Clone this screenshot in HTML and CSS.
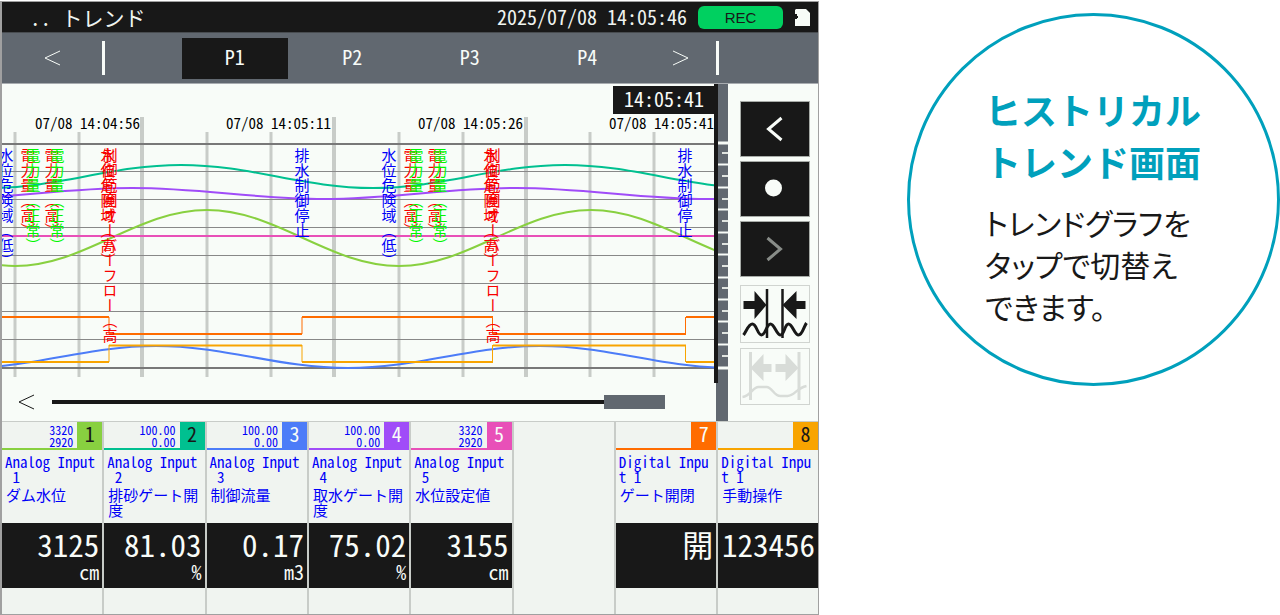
FILE: index.html
```
<!DOCTYPE html>
<html lang="ja">
<head>
<meta charset="utf-8">
<title>トレンド</title>
<link rel="stylesheet" href="styles.css">
</head>
<body>
<div class="page">
  <main class="screen">
    <header class="titlebar">
      <h1 class="title">.. トレンド</h1>
      <time class="clock">2025/07/08 14:05:46</time>
      <span class="rec">REC</span>
      <svg class="card-icon" viewBox="0 0 15 17" aria-hidden="true"><path d="M1 0h10l4 4v13H0V10h2V9h1V7H2V5H0V1z" fill="#f8fcf8"/></svg>
    </header>

    <nav class="tabs">
      <button class="step" aria-label="前へ"><svg viewBox="0 0 17 16"><path d="M16 1 1 8l15 7"/></svg></button>
      <span class="divider"></span>
      <div class="tab-list">
        <button class="tab active">P1</button>
        <button class="tab">P2</button>
        <button class="tab">P3</button>
        <button class="tab">P4</button>
      </div>
      <button class="step" aria-label="次へ"><svg viewBox="0 0 17 16"><path d="m1 1 15 7-15 7"/></svg></button>
      <span class="divider"></span>
      <span class="tab-end"></span>
    </nav>

    <section class="work">
      <div class="plot-area">
        <svg class="plot" viewBox="2 84 714 299">
          <g class="minor"><path d="M15 132V377M79 132V377M207 132V377M271 132V377M399 132V377M463 132V377M590 132V377M654 132V377"/></g>
          <g class="major"><path d="M142 117V377M334 117V377M526 117V377"/></g>
          <g class="rows"><path d="M2 171.5H715M2 199.5H715M2 227.5H715M2 255.5H715M2 283.5H715M2 311.5H715M2 339.5H715"/></g>
          <g class="edges"><path d="M2 144H715M2 368H715"/></g>
          <g class="series">
            <path class="c2" d="M-11 188C59 188 111 165 181 165S303 188 373 188S495 165 565 165S687 188 757 188"/>
            <path class="c4" d="M-60 199C10 199 62 188 132 188S254 199 324 199S446 188 516 188S638 199 708 199H716"/>
            <path class="c1" d="M-177 210C-107 210 -55 266 15 266S137 210 207 210S329 266 399 266S521 210 591 210S713 266 783 266"/>
            <path class="c5" d="M2 236H715"/>
            <path class="c3" d="M-36 368C34 368 86 346 156 346S278 368 348 368S470 346 540 346S662 368 732 368"/>
            <path class="thin c7" d="M109 317V334M302 317V334M492.500 317V334M685.500 317V334"/>
            <path class="thin c8" d="M109 345V362M302 345V362M492.500 345V362M685.500 345V362"/>
            <path class="c7" d="M2 317H109M109 334H302M302 317H493M493 334H686M686 317H715"/>
            <path class="c8" d="M2 362H109M109 345.500H302M302 362H493M493 345.500H686M686 362H715"/>
          </g>
          <g class="events">
            <text class="info" x="6" y="148">水位危険域（低）</text>
            <text class="alarm" x="28" y="148">電力量（高）</text>
            <text class="normal" x="33" y="148">電力量（正常）</text>
            <text class="alarm" x="52" y="148">電力量（高）</text>
            <text class="normal" x="57" y="148">電力量（正常）</text>
            <text class="alarm" x="108" y="148">水位危険域（高）</text>
            <text class="alarm" x="110" y="148">制御範囲オーバーフロー（高</text>
            <text class="info" x="302" y="148">排水制御停止</text>
            <text class="info" x="389" y="148">水位危険域（低）</text>
            <text class="alarm" x="411" y="148">電力量（高）</text>
            <text class="normal" x="416" y="148">電力量（正常）</text>
            <text class="alarm" x="435" y="148">電力量（高）</text>
            <text class="normal" x="440" y="148">電力量（正常）</text>
            <text class="alarm" x="491" y="148">水位危険域（高）</text>
            <text class="alarm" x="493" y="148">制御範囲オーバーフロー（高</text>
            <text class="info" x="685" y="148">排水制御停止</text>
          </g>
          <g class="times">
            <text x="140" y="129">07/08 14:04:56</text>
            <text x="331" y="129">07/08 14:05:11</text>
            <text x="523" y="129">07/08 14:05:26</text>
            <text x="714" y="129">07/08 14:05:41</text>
          </g>
          <path d="M613 86H716V114H613zM714 84H716V383H714z" fill="#181818"/>
          <text class="cursor-time" x="704" y="107">14:05:41</text>
        </svg>
        <div class="scroller">
          <button class="scroll-step" aria-label="過去へ"><svg viewBox="0 0 17 16"><path d="M16 1 1 8l15 7"/></svg></button>
          <input class="scroll" type="range" min="0" max="100" value="100" aria-label="表示位置">
        </div>
      </div>

      <svg class="rail" viewBox="0 0 12 337" preserveAspectRatio="none" aria-hidden="true">
        <path d="M0 0h12v337H0z" fill="#616870"/>
        <path d="M0 0h2v299H0z" fill="#181818"/>
        <path d="M2 59h10M2 284h10" stroke="#f8fcf8" stroke-width="3"/>
        <path d="M2 80.500h10M2 103.500h10M2 125.500h10M2 148.500h10M2 170.500h10M2 193.500h10M2 215.500h10M2 237.500h10M2 260.500h10" stroke="#f8fcf8" stroke-width="2"/>
        <path d="M6 69h6M6 92h6M6 115h6M6 137h6M6 160h6M6 182h6M6 204h6M6 227h6M6 249h6M6 272h6" stroke="#e0e4e0" stroke-width="2"/>
      </svg>

      <div class="tools">
        <button class="tool dark" aria-label="戻る"><svg viewBox="1 1 67 54"><path d="M41 17 28 28l13 11" fill="none" stroke="#f8fcf8" stroke-width="3"/></svg></button>
        <button class="tool dark" aria-label="停止"><svg viewBox="1 1 67 54"><circle cx="33" cy="27" r="8.500" fill="#f8fcf8"/></svg></button>
        <button class="tool dark" aria-label="進む"><svg viewBox="1 1 67 54"><path d="m27 17 13 11-13 11" fill="none" stroke="#888c88" stroke-width="3"/></svg></button>
        <button class="tool light zoom-in" aria-label="縮小"><svg viewBox="1 1 67 56" fill="#181818">
          <path d="M3 16h11V6l12 14-12 14V24H3zM65 16H56V6L42 20l14 14V24h9z"/>
          <path d="M26.500 4v49M42 4v49" fill="none" stroke="#181818" stroke-width="2.500"/>
          <path d="M3 50C6 46 8 39 12 39S17 50 21 50S26 39 30 39S36 50 40 50S44 39 48 39S54 50 58 50S63 42 66 38" fill="none" stroke="#181818" stroke-width="3"/>
        </svg></button>
        <button class="tool light zoom-out" aria-label="拡大" disabled><svg viewBox="1 1 67 55" fill="#d8dcd8">
          <path d="M31 16h-8V6L10 20l13 13v-9h8zM35 16h10V6l13 14-13 13v-9H35z"/>
          <path d="M10 4v48M58.500 4v48" fill="none" stroke="#d8dcd8" stroke-width="3"/>
          <path d="M2 49C10 48 12 39 18 39H26C32 39 33 48 40 48H47C54 48 56 40 66 38" fill="none" stroke="#d8dcd8" stroke-width="2.500"/>
        </svg></button>
      </div>
    </section>

    <section class="channels">
      <article class="channel b1">
        <header class="head"><span class="limits">3320<br>2920</span><span class="num">1</span></header>
        <h2 class="name">Analog Input
 1</h2><p class="tag">ダム水位</p>
        <div class="reading"><strong class="value">3125</strong><span class="unit">cm</span></div>
      </article>
      <article class="channel b2">
        <header class="head"><span class="limits">100.00<br>0.00</span><span class="num">2</span></header>
        <h2 class="name">Analog Input
 2</h2><p class="tag">排砂ゲート開度</p>
        <div class="reading"><strong class="value">81.03</strong><span class="unit">%</span></div>
      </article>
      <article class="channel b3">
        <header class="head"><span class="limits">100.00<br>0.00</span><span class="num pale">3</span></header>
        <h2 class="name">Analog Input
 3</h2><p class="tag">制御流量</p>
        <div class="reading"><strong class="value">0.17</strong><span class="unit">m3</span></div>
      </article>
      <article class="channel b4">
        <header class="head"><span class="limits">100.00<br>0.00</span><span class="num pale">4</span></header>
        <h2 class="name">Analog Input
 4</h2><p class="tag">取水ゲート開度</p>
        <div class="reading"><strong class="value">75.02</strong><span class="unit">%</span></div>
      </article>
      <article class="channel b5">
        <header class="head"><span class="limits">3320<br>2920</span><span class="num pale">5</span></header>
        <h2 class="name">Analog Input
 5</h2><p class="tag">水位設定値</p>
        <div class="reading"><strong class="value">3155</strong><span class="unit">cm</span></div>
      </article>
      <article class="channel"></article>
      <article class="channel b7">
        <header class="head"><span class="limits"></span><span class="num pale">7</span></header>
        <h2 class="name">Digital Inpu
t 1</h2><p class="tag">ゲート開閉</p>
        <div class="reading"><strong class="value">開</strong></div>
      </article>
      <article class="channel b8">
        <header class="head"><span class="limits"></span><span class="num">8</span></header>
        <h2 class="name">Digital Inpu
t 1</h2><p class="tag">手動操作</p>
        <div class="reading"><strong class="value">123456</strong></div>
      </article>
    </section>
  </main>

  <aside class="callout">
    <div class="bubble">
      <h2 class="bubble-title">ヒストリカル<br>トレンド画面</h2>
      <p class="bubble-text">トレンドグラフを<br>タップで切替え<br>できます。</p>
    </div>
  </aside>
</div>
</body>
</html>
```
FILE: styles.css
```
* { box-sizing: border-box; }

body {
  margin: 0;
  background: #fff;
  color: #181818;
  font-family: "Noto Sans Mono CJK JP", "Noto Sans CJK JP", monospace;
}

h1, h2, p { margin: 0; font-weight: 400; }

button {
  margin: 0;
  padding: 0;
  border: 0;
  background: none;
  color: inherit;
  font: inherit;
}

svg { display: block; }

.page {
  display: grid;
  grid-template-columns: 819fr 461fr;
  align-items: start;
}

.screen {
  margin-top: 1px;
  border: 1px solid #a0a0a0;
  border-left-width: 2px;
  background: #f8fcf8;
}

/* title bar */
.titlebar {
  display: flex;
  align-items: center;
  height: 30px;
  padding: 0 8px 0 28px;
  background: #181818;
  color: #f0f4f0;
  font-size: 20px;
  font-weight: 300;
  line-height: 28px;
}

.title { font-size: 21px; font-weight: 300; white-space: pre; }
.clock { margin-left: auto; }

.rec {
  width: 85px;
  height: 23px;
  margin: 0 12px 0 11px;
  border-radius: 6px;
  background: #00d060;
  color: #181818;
  font: 15px/23px "Liberation Sans", Arial, sans-serif;
  text-align: center;
}

.card-icon { width: 15px; height: 17px; }

/* page tabs */
.tabs {
  display: flex;
  align-items: center;
  height: 52px;
  border-top: 1px solid #484c50;
  border-bottom: 1px solid #a8acb0;
  background: #616870;
  color: #f8fcf8;
  font-size: 20px;
  font-weight: 300;
}

.step { width: 100px; height: 40px; }
.step svg { width: 17px; height: 16px; margin: 0 auto; fill: none; stroke: #f8fcf8; }
.divider { width: 3px; height: 34px; background: #f8fcf8; }
.tab-list { display: flex; flex: 1; gap: 12px; padding: 0 5px 0 77px; }
.tab { flex: 1; height: 41px; padding-bottom: 3px; }
.tab.active { background: #181818; }
.tab-list + .step { width: 71px; }
.tab-end { width: 99px; }

/* trend */
.work { display: grid; grid-template-columns: 1fr 12px 90px; }
.plot { width: 100%; height: auto; }
.minor { stroke: #c8ccc8; stroke-width: 3; }
.major { stroke: #c8ccc8; stroke-width: 4; }
.rows { stroke: #888888; stroke-width: 1; }
.edges { stroke: #787878; stroke-width: 2; }
.series { fill: none; stroke-width: 2; }
.series .thin { stroke-width: 1; }
.c1 { stroke: #88d040; }
.c2 { stroke: #00c090; }
.c3 { stroke: #4c7cf8; }
.c4 { stroke: #a04cf8; }
.c5 { stroke: #e850b8; }
.c7 { stroke: #ff6c00; }
.c8 { stroke: #f8a400; }

.events text { writing-mode: vertical-rl; font-size: 15px; }
.info { fill: #0000f8; }
.alarm { fill: #f80000; }
.normal { fill: #00f800; }
.times text { font-size: 15px; text-anchor: end; }
.cursor-time { fill: #f8fcf8; font-size: 20px; font-weight: 300; text-anchor: end; }

.scroller { display: flex; align-items: center; height: 38px; padding: 0 51px 0 16px; }
.scroll-step { width: 34px; height: 30px; }
.scroll-step svg { width: 17px; height: 16px; fill: none; stroke: #181818; }

.scroll {
  flex: 1;
  min-width: 0;
  height: 14px;
  margin: 0;
  appearance: none;
  background: linear-gradient(#181818, #181818) center / 100% 4px no-repeat;
}

.scroll::-webkit-slider-thumb {
  appearance: none;
  width: 61px;
  height: 14px;
  background: #616870;
}

.rail { width: 12px; height: 100%; }

.tools {
  display: flex;
  flex-direction: column;
  gap: 4px;
  padding: 17px 8px 0 12px;
}

.tool { height: 56px; border: 1px solid #a8aca8; }
.tool svg { width: 100%; height: 100%; }
.dark { background: #181818; }
.light { border-color: #d0d4d0; }
.zoom-in { height: 58px; margin-top: 4px; }
.zoom-out { height: 57px; margin-top: 1px; }

/* channels */
.channels {
  display: grid;
  grid-template-columns: repeat(7, 41fr) 40fr;
  border-top: 1px solid #c8ccc8;
  background: #f0f4f0;
}

.channel {
  min-width: 0;
  height: 192px;
  border-right: 2px solid #c8ccc8;
  color: #0000f8;
}

.channel:last-child { border-right: 0; }

.head {
  display: flex;
  justify-content: flex-end;
  height: 28px;
  border-bottom: 2px solid;
}

.limits { padding: 2px 4px 0 0; font-size: 12px; line-height: 12px; text-align: right; }
.num { width: 25px; height: 28px; color: #181818; font-size: 20px; font-weight: 300; line-height: 24px; text-align: center; }
.num.pale { color: #f8fcf8; }
.head .limits { color: #0000f8; }

.b1 .head { border-color: #88d040; }
.b1 .num { background: #88d040; }
.b2 .head { border-color: #00c090; }
.b2 .num { background: #00c090; }
.b3 .head { border-color: #4c7cf8; }
.b3 .num { background: #4c7cf8; }
.b4 .head { border-color: #a04cf8; }
.b4 .num { background: #a04cf8; }
.b5 .head { border-color: #e850b8; }
.b5 .num { background: #e850b8; }
.b7 .head { border-color: #ff6c00; }
.b7 .num { background: #ff6c00; }
.b8 .head { border-color: #f8a400; }
.b8 .num { background: #f8a400; }

.name { height: 32px; padding: 4px 0 0 3px; font-size: 15px; line-height: 15px; white-space: pre; }
.tag { height: 41px; padding: 5px 0 0 4px; font-size: 15px; line-height: 15px; word-break: break-all; }

.reading {
  display: flex;
  flex-direction: column;
  align-items: flex-end;
  height: 65px;
  padding: 2px 3px 0 0;
  background: #181818;
  color: #f8fcf8;
}

.value { font-size: 31px; font-weight: 400; line-height: 37px; }
.unit { font-size: 20px; font-weight: 300; line-height: 20px; }

/* callout */
.callout { padding: 13px 0 0 88px; }

.bubble {
  aspect-ratio: 1;
  padding: 67px 0 0 75px;
  border: 3px solid #00a0bc;
  border-radius: 50%;
  font-family: "Noto Sans CJK JP", sans-serif;
  white-space: nowrap;
}

.bubble-title { color: #00a0bc; font-size: 36px; font-weight: 700; line-height: 52px; }
.bubble-text { margin-top: 14px; font-size: 30px; line-height: 42px; font-feature-settings: "palt"; }
```
